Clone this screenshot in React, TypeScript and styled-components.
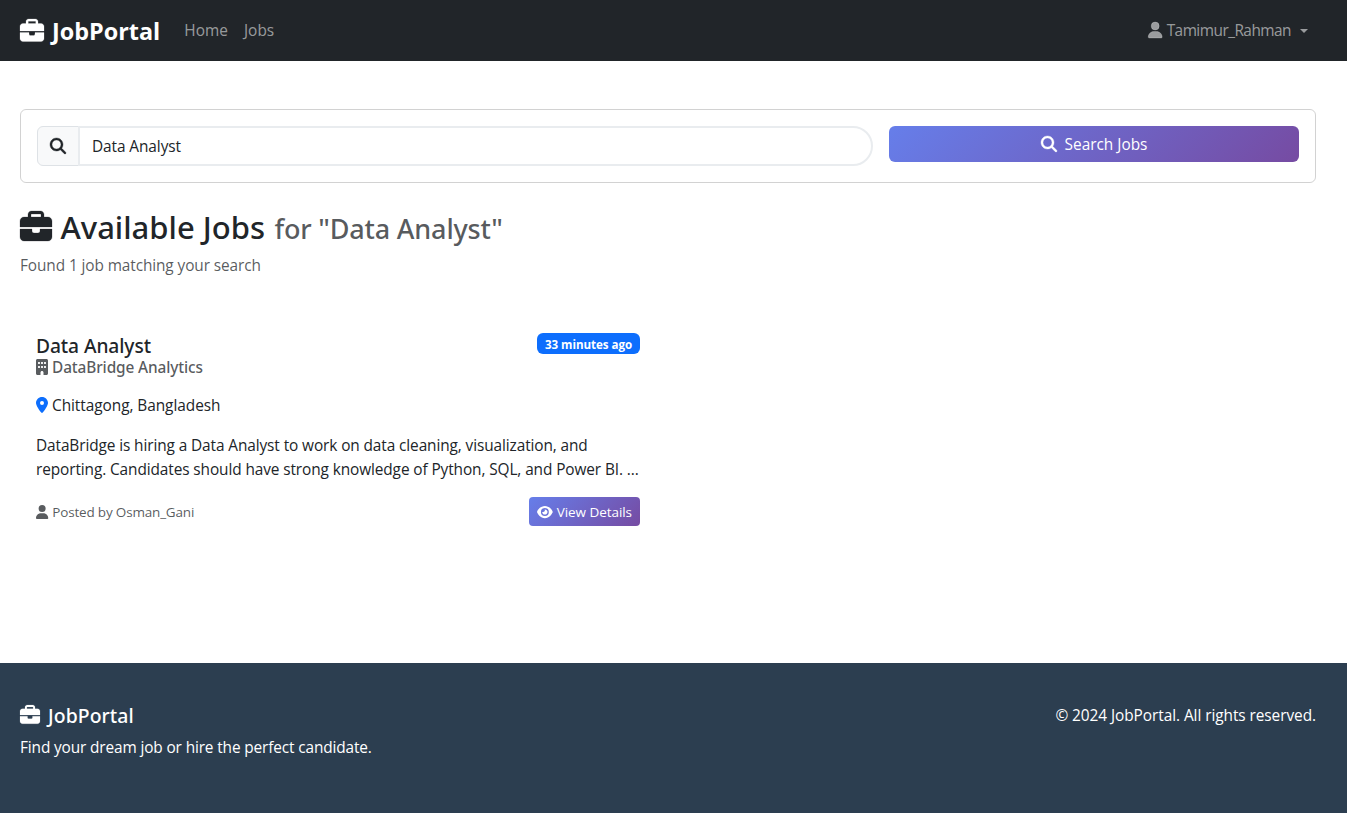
import React from "react";
import styled, { createGlobalStyle } from "styled-components";
import {
  FaBriefcase,
  FaBuilding,
  FaEye,
  FaLocationDot,
  FaMagnifyingGlass,
  FaUser,
} from "react-icons/fa6";

const GlobalStyle = createGlobalStyle`
  *, *::before, *::after { box-sizing: border-box; }
  html, body, #root { height: 100%; }
  body {
    margin: 0;
    background: #fff;
    color: #212529;
    font-family: "Open Sans", sans-serif;
    font-size: 15.4px;
    line-height: 24px;
    letter-spacing: -0.1px;
  }
  h1, h2, h5, h6, p { margin: 0; }
`;

const gradient = "linear-gradient(135deg, #667eea 0%, #764ba2 100%)";
const medium = `font-family: "Noto Sans", sans-serif; font-weight: 500;`;

const Page = styled.div`
  display: flex;
  flex-direction: column;
  min-height: 100%;
`;

const Icon = styled.span<{
  $size: number;
  $ratio?: number;
  $gap?: number;
  $color?: string;
  $lift?: number;
  $weight?: number;
}>`
  display: inline-flex;
  flex: none;
  font-size: ${(p) => p.$size}px;
  margin-right: ${(p) => p.$gap ?? 0}px;
  margin-bottom: ${(p) => p.$lift ?? 0}px;
  color: ${(p) => p.$color ?? "inherit"};

  svg {
    width: ${(p) => p.$ratio ?? 1}em;
    height: 1em;
    overflow: visible;
    stroke-width: ${(p) => p.$weight ?? 0};
  }
`;

const Navbar = styled.nav`
  display: flex;
  align-items: center;
  height: 61px;
  padding: 0 39px 0 20px;
  background: #212529;
`;

const Brand = styled.a`
  display: flex;
  align-items: center;
  margin-right: 16px;
  color: #fff;
  font-size: 23.4px;
  font-weight: 700;
  letter-spacing: 0;
`;

const NavLink = styled.a`
  padding: 0 8px;
  color: rgba(255, 255, 255, 0.55);
  letter-spacing: 0.04px;
`;

const UserMenu = styled.a`
  display: flex;
  align-items: center;
  margin-left: auto;
  color: rgba(255, 255, 255, 0.55);
  letter-spacing: -0.52px;
`;

const Caret = styled.span`
  margin-left: 9px;
  border-top: 4.8px solid;
  border-left: 4.8px solid transparent;
  border-right: 4.8px solid transparent;
`;

const Main = styled.main`
  flex: 1;
  padding: 48px 31px 0 20px;
`;

const SearchCard = styled.form`
  display: grid;
  grid-template-columns: 836px 1fr;
  gap: 16px;
  align-items: start;
  height: 74px;
  padding: 16px;
  border: 1px solid rgba(0, 0, 0, 0.175);
  border-radius: 6px;
`;

const InputGroup = styled.div`
  display: flex;
  height: 40px;
`;

const Addon = styled.span`
  display: flex;
  align-items: center;
  justify-content: center;
  width: 42px;
  background: #f8f9fa;
  border: 1px solid #dee2e6;
  border-radius: 6px 0 0 6px;
`;

const SearchInput = styled.input`
  flex: 1;
  min-width: 0;
  margin: 0 0 0 -1px;
  padding: 2px 14px 0 12px;
  border: 2px solid #e9ecef;
  border-radius: 0 25px 25px 0;
  background: #fff;
  color: #212529;
  font: inherit;
  letter-spacing: -0.08px;
  outline: none;
`;

const SearchButton = styled.button`
  display: flex;
  align-items: center;
  justify-content: center;
  height: 36px;
  padding: 2px 0 0;
  border: 0;
  border-radius: 6px;
  background: ${gradient};
  color: #fff;
  font: inherit;
  letter-spacing: 0;
`;

const Heading = styled.h2`
  display: flex;
  align-items: baseline;
  margin-top: 24px;
  height: 38px;
  ${medium}
  font-size: 31px;
  line-height: 41px;
  letter-spacing: 0;
`;

const HeadingIcon = styled(Icon)`
  align-self: flex-start;
  margin-top: 4px;
`;

const HeadingQuery = styled.small`
  margin-left: 9.5px;
  color: rgba(33, 37, 41, 0.75);
  font-size: 27px;
  letter-spacing: -0.18px;
`;

const ResultCount = styled.p`
  margin-top: 9px;
  color: rgba(33, 37, 41, 0.75);
`;

const JobCard = styled.article`
  width: 636px;
  margin-top: 40px;
  padding: 16px;
`;

const JobHeader = styled.header`
  display: flex;
  justify-content: space-between;
  align-items: flex-start;
`;

const JobTitle = styled.h5`
  ${medium}
  font-size: 19.2px;
  line-height: 24px;
  letter-spacing: -0.08px;
`;

const Company = styled.h6`
  display: flex;
  align-items: center;
  ${medium}
  font-size: 15.4px;
  line-height: 20px;
  letter-spacing: -0.12px;
  color: rgba(33, 37, 41, 0.75);
`;

const Badge = styled.span`
  height: 21px;
  margin-top: -1px;
  padding: 0 8px;
  border-radius: 6px;
  background: #0d6efd;
  color: #fff;
  font-size: 11.6px;
  font-weight: 700;
  line-height: 23px;
  letter-spacing: -0.06px;
`;

const Location = styled.p`
  display: flex;
  align-items: center;
  margin-top: 16px;
  letter-spacing: -0.05px;
`;

const Description = styled.p`
  margin-top: 16px;
  letter-spacing: -0.1px;
  white-space: nowrap;
`;

const JobFooter = styled.footer`
  display: flex;
  align-items: center;
  justify-content: space-between;
  margin-top: 15px;
`;

const PostedBy = styled.small`
  display: flex;
  align-items: center;
  color: rgba(33, 37, 41, 0.75);
  font-size: 13.5px;
  letter-spacing: -0.18px;
`;

const DetailsButton = styled.a`
  display: flex;
  align-items: center;
  height: 29px;
  padding: 0 8px;
  border-radius: 4px;
  background: ${gradient};
  color: #fff;
  font-size: 13.5px;
  letter-spacing: -0.05px;
`;

const SiteFooter = styled.footer`
  display: flex;
  justify-content: space-between;
  height: 150px;
  padding: 41px 31px 0 20px;
  background: #2c3e50;
  color: #fff;
`;

const FooterTitle = styled.h5`
  display: flex;
  align-items: center;
  margin-bottom: 8px;
  ${medium}
  font-size: 19.4px;
  line-height: 24px;
  letter-spacing: 0.08px;
`;

const Tagline = styled.p`
  letter-spacing: -0.13px;
`;

const Copyright = styled.p`
  letter-spacing: -0.06px;
`;

export default function App() {
  return (
    <Page>
      <GlobalStyle />
      <Navbar>
        <Brand>
          <Icon $size={24} $gap={8} $weight={5}><FaBriefcase /></Icon>
          JobPortal
        </Brand>
        <NavLink>Home</NavLink>
        <NavLink>Jobs</NavLink>
        <UserMenu>
          <Icon $size={16} $ratio={0.9} $gap={4} $lift={2} $weight={12}><FaUser /></Icon>
          Tamimur_Rahman
          <Caret />
        </UserMenu>
      </Navbar>

      <Main>
        <SearchCard>
          <InputGroup>
            <Addon><Icon $size={16} $weight={12}><FaMagnifyingGlass /></Icon></Addon>
            <SearchInput type="text" defaultValue="Data Analyst" />
          </InputGroup>
          <SearchButton type="button">
            <Icon $size={16} $gap={8} $lift={2} $weight={12}><FaMagnifyingGlass /></Icon>
            Search Jobs
          </SearchButton>
        </SearchCard>

        <Heading>
          <HeadingIcon $size={32} $gap={8.5} $weight={4}><FaBriefcase /></HeadingIcon>
          Available Jobs
          <HeadingQuery>for "Data Analyst"</HeadingQuery>
        </Heading>
        <ResultCount>Found 1 job matching your search</ResultCount>

        <JobCard>
          <JobHeader>
            <div>
              <JobTitle>Data Analyst</JobTitle>
              <Company>
                <Icon $size={16} $ratio={0.75} $gap={4} $lift={2}><FaBuilding /></Icon>
                DataBridge Analytics
              </Company>
            </div>
            <Badge>33 minutes ago</Badge>
          </JobHeader>
          <Location>
            <Icon $size={16} $ratio={0.75} $gap={4} $lift={2} $color="#0d6efd"><FaLocationDot /></Icon>
            Chittagong, Bangladesh
          </Location>
          <Description>
            DataBridge is hiring a Data Analyst to work on data cleaning, visualization, and
            <br />
            reporting. Candidates should have strong knowledge of Python, SQL, and Power BI. ...
          </Description>
          <JobFooter>
            <PostedBy>
              <Icon $size={14} $ratio={0.875} $gap={4}><FaUser /></Icon>
              Posted by Osman_Gani
            </PostedBy>
            <DetailsButton>
              <Icon $size={14} $ratio={1.125} $gap={4}><FaEye /></Icon>
              View Details
            </DetailsButton>
          </JobFooter>
        </JobCard>
      </Main>

      <SiteFooter>
        <div>
          <FooterTitle>
            <Icon $size={20} $gap={8} $lift={2} $weight={4}><FaBriefcase /></Icon>
            JobPortal
          </FooterTitle>
          <Tagline>Find your dream job or hire the perfect candidate.</Tagline>
        </div>
        <Copyright>© 2024 JobPortal. All rights reserved.</Copyright>
      </SiteFooter>
    </Page>
  );
}
